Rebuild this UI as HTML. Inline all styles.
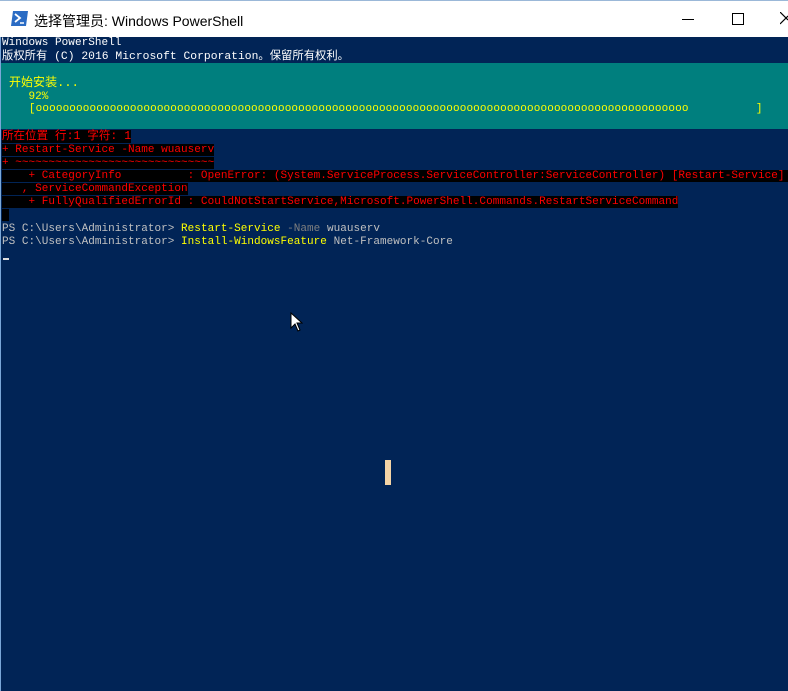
<!DOCTYPE html>
<html><head><meta charset="utf-8"><style>
body{margin:0;width:788px;height:691px;overflow:hidden;background:#012456;position:relative;font-family:"Liberation Mono","Noto Sans CJK SC",monospace;}
.title{position:absolute;left:0;top:0;width:788px;height:37px;background:#fff;border-top:1px solid #9bb8d8;box-sizing:border-box;}
.title .t{position:absolute;left:34px;top:10px;font:14px "Liberation Sans","Noto Sans CJK SC",sans-serif;color:#000;}
.l{position:absolute;left:2px;font-size:11px;line-height:13px;white-space:pre;color:#c0c0c0;letter-spacing:0.03px;}
.r{color:#f00;background:#000;}
.y{color:#ffff00}
.g{color:#7f7f7f}
.teal{position:absolute;left:0;top:63px;width:788px;height:66px;background:#007f7e;}
</style></head><body>
<div class="title">
<svg style="position:absolute;left:11px;top:10px" width="17" height="15"><polygon points="2,0 17,0 15,15 0,15" fill="#2b6cc4"/><path d="M4 3 L9 7 L4 11" stroke="#fff" stroke-width="1.8" fill="none"/><path d="M9 12 H13" stroke="#fff" stroke-width="1.5"/></svg>
<div class="t">选择管理员: Windows PowerShell</div>
<div style="position:absolute;left:682px;top:18px;width:12px;height:1px;background:#000"></div>
<div style="position:absolute;left:732px;top:12px;width:10px;height:10px;border:1px solid #000"></div>
<svg style="position:absolute;left:780px;top:11px" width="8" height="13"><path d="M0 0 L8 8 M0 12 L8 4" stroke="#000" stroke-width="1.2"/></svg>
</div>
<div class="l" style="top:37px;color:#fff">Windows PowerShell</div>
<div class="l" style="top:51px;color:#fff;font-size:11.3px">版权所有 (C) 2016 Microsoft Corporation。保留所有权利。</div>
<div class="teal"></div>
<div class="l y" style="top:77px;left:9px;font-size:12px">开始安装...</div>
<div class="l y" style="top:91px">    92%</div>
<div class="l y" style="top:103px;letter-spacing:0.13px">    [ooooooooooooooooooooooooooooooooooooooooooooooooooooooooooooooooooooooooooooooooooooooooooooooooo          ]</div>
<div class="l" style="top:130px;font-size:11.5px"><span class="r">所在位置 行:1 字符: 1</span></div>
<div class="l" style="top:144px"><span class="r">+ Restart-Service -Name wuauserv</span></div>
<div class="l" style="top:157px"><span class="r">+ ~~~~~~~~~~~~~~~~~~~~~~~~~~~~~~</span></div>
<div class="l" style="top:170px"><span class="r">    + CategoryInfo          : OpenError: (System.ServiceProcess.ServiceController:ServiceController) [Restart-Service] </span></div>
<div class="l" style="top:183px"><span class="r">   , ServiceCommandException</span></div>
<div class="l" style="top:196px"><span class="r">    + FullyQualifiedErrorId : CouldNotStartService,Microsoft.PowerShell.Commands.RestartServiceCommand</span></div>
<div class="l" style="top:209px"><span class="r"> </span></div>
<div class="l" style="top:223px">PS C:\Users\Administrator> <span class="y">Restart-Service</span> <span class="g">-Name</span> wuauserv</div>
<div class="l" style="top:236px">PS C:\Users\Administrator> <span class="y">Install-WindowsFeature</span> Net-Framework-Core</div>
<div style="position:absolute;left:3px;top:258px;width:6px;height:2px;background:#ddd"></div>
<svg style="position:absolute;left:290px;top:312px" width="13" height="20"><path d="M1 1 L1 16 L5 12 L8 19 L10 18 L7 11 L12 11 Z" fill="#fff" stroke="#000" stroke-width="1"/></svg>
<div style="position:absolute;left:385px;top:460px;width:6px;height:25px;background:#f4d4a6"></div>
<div style="position:absolute;left:0;top:37px;width:1px;height:654px;background:#7aa7d8"></div>
</body></html>
